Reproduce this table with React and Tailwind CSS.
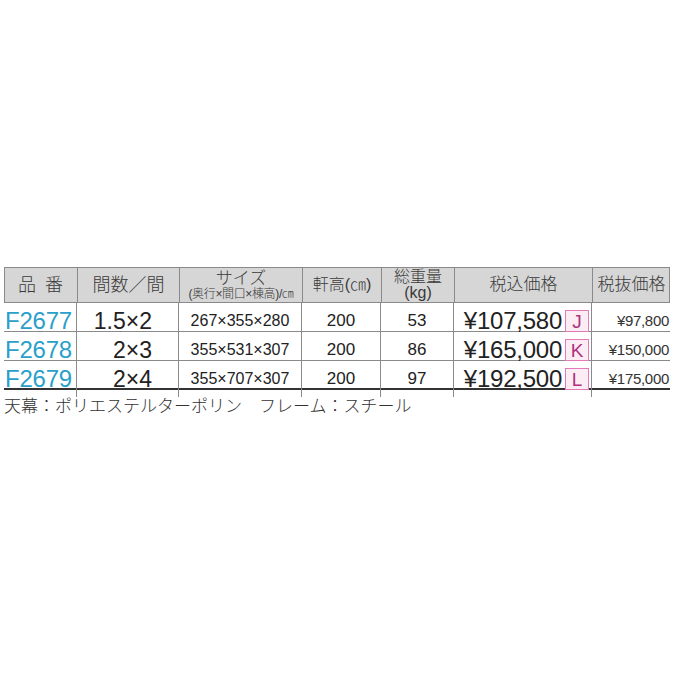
import React from 'react';

const rows = [
  { code: 'F2677', ken: '1.5×2', size: '267×355×280', height: '200', weight: '53', price: '¥107,580', badge: 'J', net: '¥97,800' },
  { code: 'F2678', ken: '2×3', size: '355×531×307', height: '200', weight: '86', price: '¥165,000', badge: 'K', net: '¥150,000' },
  { code: 'F2679', ken: '2×4', size: '355×707×307', height: '200', weight: '97', price: '¥192,500', badge: 'L', net: '¥175,000' },
];

const font = { fontFamily: '"Liberation Sans", "Noto Sans CJK JP", sans-serif' };

const cols = 'grid grid-cols-[72px_102px_123px_79px_73px_138px_78px]';

const App = () => {
  return (
    <div className="w-[680px] h-[680px] bg-white" style={font}>
      <div className="pt-[267px] pl-[4px]">
        <div className="w-[666px]">
          <div className={`${cols} h-[36px] bg-[#d6d6d6] border border-[#8a8a8a] text-[#3a3a3a] font-light`}>
            <div className="flex items-center justify-center text-[18px] tracking-[0.5em] pl-[8px]">品番</div>
            <div className="flex items-center justify-center border-l border-[#8a8a8a] text-[18px]">間数／間</div>
            <div className="flex flex-col items-center justify-center border-l border-[#8a8a8a] leading-none">
              <span className="text-[17px]">サイズ</span>
              <span className="text-[12px] tracking-[-0.03em] mt-[1px]">(奥行×間口×棟高)/㎝</span>
            </div>
            <div className="flex items-center justify-center border-l border-[#8a8a8a] text-[16px]">軒高(㎝)</div>
            <div className="flex flex-col items-center justify-center border-l border-[#8a8a8a] text-[16px] leading-[16px]">
              <span>総重量</span>
              <span>(kg)</span>
            </div>
            <div className="flex items-center justify-center border-l border-[#8a8a8a] text-[17px]">税込価格</div>
            <div className="flex items-center justify-center border-l border-[#8a8a8a] text-[17px]">税抜価格</div>
          </div>
          {rows.map((r, i) => (
            <div
              key={r.code}
              className={`${cols} h-[29px] ${i === rows.length - 1 ? 'border-b-2 border-[#333]' : 'border-b border-[#8a8a8a]'}`}
            >
              <div className="flex items-center text-[24px] text-[#2a9fc9] pl-[1px] tracking-[-0.01em]">{r.code}</div>
              <div className="flex items-center justify-end pr-[26px] border-l border-[#8a8a8a] text-[23px] text-[#222]">{r.ken}</div>
              <div className="flex items-center justify-center border-l border-[#8a8a8a] text-[16px] text-[#222]">{r.size}</div>
              <div className="flex items-center justify-center border-l border-[#8a8a8a] text-[17px] text-[#222]">{r.height}</div>
              <div className="flex items-center justify-center border-l border-[#8a8a8a] text-[17px] text-[#222]">{r.weight}</div>
              <div className="flex items-center justify-end gap-[3px] border-l border-[#8a8a8a] pr-[2px] text-[24px] text-[#222]">
                <span className="tracking-[-0.01em]">{r.price}</span>
                <span className="w-[24px] h-[22px] shrink-0 flex items-center justify-center border border-[#e27bb8] bg-[#fcedf5] text-[#b0307f] text-[19px] leading-none">
                  {r.badge}
                </span>
              </div>
              <div className="flex items-center justify-end border-l border-[#8a8a8a] text-[15px] text-[#333] tracking-[-0.02em]">{r.net}</div>
            </div>
          ))}
          <div className="mt-[8px] text-[17px] leading-none text-[#333] font-light">天幕：ポリエステルターポリン　フレーム：スチール</div>
        </div>
      </div>
    </div>
  );
};

export default App;
